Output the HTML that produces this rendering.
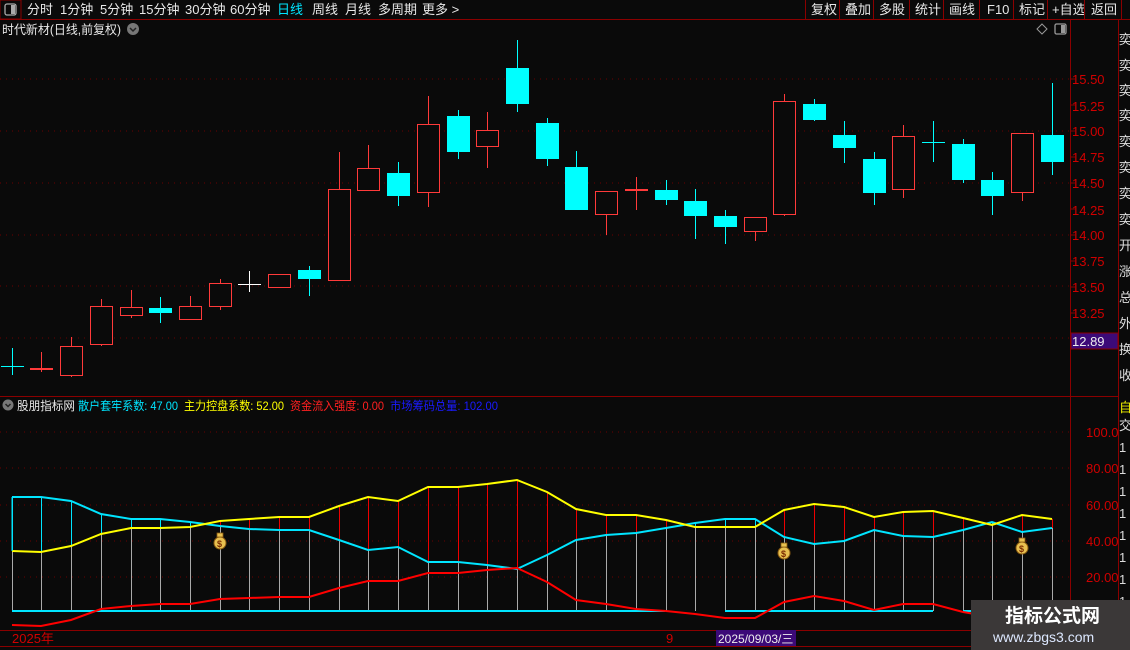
<!DOCTYPE html>
<html><head><meta charset="utf-8"><style>
html,body{margin:0;padding:0;background:#0a0a0a;width:1130px;height:650px;overflow:hidden;font-family:"Liberation Sans","Noto Sans CJK SC",sans-serif}
svg{position:absolute;left:0;top:0}
text{font-family:"Liberation Sans","Noto Sans CJK SC",sans-serif}
</style></head><body>
<svg id="s" width="1130" height="650" xmlns="http://www.w3.org/2000/svg">
<rect width="1130" height="650" fill="#0a0a0a"/>
<line x1="0" y1="19.5" x2="1130" y2="19.5" stroke="#8b0000"/>
<rect x="0" y="0" width="21" height="19" fill="none" stroke="#8b0000"/>
<rect x="5" y="4" width="11" height="11" rx="2" fill="none" stroke="#aaa" stroke-width="1.3"/>
<rect x="11" y="5" width="4" height="9" fill="#aaa"/>
<g font-size="13" fill="#e8e8e8">
<text x="27" y="14">分时</text><text x="60" y="14">1分钟</text><text x="100" y="14">5分钟</text><text x="139" y="14">15分钟</text><text x="185" y="14">30分钟</text><text x="230" y="14">60分钟</text>
<text x="277" y="14" fill="#00e5ff">日线</text><text x="312" y="14">周线</text><text x="345" y="14">月线</text><text x="378" y="14">多周期</text><text x="422" y="14">更多 &gt;</text>
<text x="811" y="14">复权</text><text x="845" y="14">叠加</text><text x="879" y="14">多股</text><text x="915" y="14">统计</text><text x="949" y="14">画线</text><text x="987" y="14">F10</text><text x="1019" y="14">标记</text><text x="1052" y="14">+自选</text><text x="1091" y="14">返回</text>
</g>
<g stroke="#8b0000"><line x1="805.5" y1="0" x2="805.5" y2="19"/><line x1="839.5" y1="0" x2="839.5" y2="19"/><line x1="873.5" y1="0" x2="873.5" y2="19"/><line x1="909.5" y1="0" x2="909.5" y2="19"/><line x1="943.5" y1="0" x2="943.5" y2="19"/><line x1="979.5" y1="0" x2="979.5" y2="19"/><line x1="1013.5" y1="0" x2="1013.5" y2="19"/><line x1="1047.5" y1="0" x2="1047.5" y2="19"/><line x1="1084.5" y1="0" x2="1084.5" y2="19"/><line x1="1121.5" y1="0" x2="1121.5" y2="19"/></g>
<text x="2" y="34" font-size="12.5" fill="#e8e8e8" textLength="119" lengthAdjust="spacingAndGlyphs">时代新材(日线,前复权)</text>
<circle cx="133" cy="29" r="6" fill="#777"/><path d="M130 28l3 3 3-3" stroke="#222" stroke-width="1.5" fill="none"/>
<path d="M1042 24l5 5-5 5-5-5z" fill="none" stroke="#999"/>
<rect x="1055" y="24" width="11" height="10" rx="1.5" fill="none" stroke="#999" stroke-width="1.3"/><rect x="1061" y="25" width="4" height="8" fill="#999"/>
<line x1="1070.5" y1="20" x2="1070.5" y2="650" stroke="#8b0000"/>
<line x1="1118.5" y1="20" x2="1118.5" y2="650" stroke="#8b0000"/>
<line x1="0" y1="396.5" x2="1118" y2="396.5" stroke="#8b0000"/>
<line x1="0" y1="630.5" x2="1118" y2="630.5" stroke="#8b0000"/>
<line x1="0" y1="646.5" x2="1118" y2="646.5" stroke="#8b0000"/>
<g id="g"></g>
<circle cx="8" cy="405" r="5.5" fill="#777"/><path d="M5.5 404l2.5 2.5 2.5-2.5" stroke="#222" stroke-width="1.5" fill="none"/>
<g font-size="12"><text x="17" y="410" fill="#e8e8e8" textLength="58" lengthAdjust="spacingAndGlyphs">股朋指标网</text><text x="78" y="410" fill="#00e5ff" textLength="100" lengthAdjust="spacingAndGlyphs">散户套牢系数: 47.00</text><text x="184" y="410" fill="#ffff00" textLength="100" lengthAdjust="spacingAndGlyphs">主力控盘系数: 52.00</text><text x="290" y="410" fill="#ff2020" textLength="94" lengthAdjust="spacingAndGlyphs">资金流入强度: 0.00</text><text x="390" y="410" fill="#1a1aff" textLength="108" lengthAdjust="spacingAndGlyphs">市场筹码总量: 102.00</text></g>
<g font-size="13" fill="#d00000">
<text x="1072" y="84">15.50</text><text x="1072" y="111">15.25</text><text x="1072" y="136">15.00</text><text x="1072" y="162">14.75</text><text x="1072" y="188">14.50</text><text x="1072" y="215">14.25</text><text x="1072" y="240">14.00</text><text x="1072" y="266">13.75</text><text x="1072" y="292">13.50</text><text x="1072" y="318">13.25</text>
<text x="1086" y="437">100.0</text><text x="1086" y="473">80.00</text><text x="1086" y="510">60.00</text><text x="1086" y="546">40.00</text><text x="1086" y="582">20.00</text>
<text x="12" y="643">2025年</text><text x="666" y="643">9</text>
</g>
<rect x="1071" y="333" width="47" height="16" fill="#3c0a78" stroke="#8b0000"/>
<text x="1072" y="346" font-size="13" fill="#eee">12.89</text>
<rect x="716" y="630" width="80" height="16" fill="#3c0a78"/>
<text x="718" y="643" font-size="12" fill="#eee">2025/09/03/三</text>
<g font-size="13" fill="#ddd"><text x="1119" y="44">奕</text><text x="1119" y="70">奕</text><text x="1119" y="95">奕</text><text x="1119" y="120">奕</text><text x="1119" y="146">奕</text><text x="1119" y="172">奕</text><text x="1119" y="198">奕</text><text x="1119" y="224">奕</text><text x="1119" y="250">开</text><text x="1119" y="276">涨</text><text x="1119" y="302">总</text><text x="1119" y="328">外</text><text x="1119" y="354">换</text><text x="1119" y="380">收</text>
<text x="1119" y="412" fill="#ee0">自</text><text x="1119" y="430">交</text><text x="1119" y="452">1</text><text x="1119" y="474">1</text><text x="1119" y="496">1</text><text x="1119" y="518">1</text><text x="1119" y="540">1</text><text x="1119" y="562">1</text><text x="1119" y="584">1</text><text x="1119" y="606">1</text></g>
<rect x="971" y="600" width="159" height="50" fill="#3b3838"/>
<text x="1005" y="622" font-size="19" font-weight="bold" fill="#fff">指标公式网</text>
<text x="993" y="642" font-size="14" fill="#dde8ff">www.zbgs3.com</text>
</svg>
<script>
var g=document.getElementById('g'),h='';
var X=[12,41,71,101,131,160,190,220,249,279,309,339,368,398,428,458,487,517,547,576,606,636,666,695,725,755,784,814,844,874,903,933,963,992,1022,1052];
[79,131,183,235,286,338].forEach(function(y){h+='<line x1="0" y1="'+y+'" x2="1070" y2="'+y+'" stroke="#6a0000" stroke-dasharray="1 5"/>';});
[432,468,505,541,577].forEach(function(y){h+='<line x1="0" y1="'+y+'" x2="1070" y2="'+y+'" stroke="#6a0000" stroke-dasharray="1 5"/>';});
for(var y=79;y<340;y+=26)h+='<line x1="1070" y1="'+y+'" x2="1075" y2="'+y+'" stroke="#8b0000"/>';
var C=[['c',366,366,348,375],['r',369,369,352,372],['r',346,375,337,377],['r',306,344,299,346],['r',307,315,290,318],['c',308,313,297,323],['r',306,319,296,320],['r',283,306,279,310],['w',284,284,271,292],['r',274,287,274,287],['c',270,279,266,296],['r',189,280,152,280],['r',168,190,145,190],['c',173,196,162,206],['r',124,192,96,207],['c',116,152,110,159],['r',130,146,112,168],['c',68,104,40,112],['c',123,159,118,166],['c',167,210,151,210],['r',191,214,191,235],['r',190,190,177,210],['c',190,200,180,205],['c',201,216,189,239],['c',216,227,210,244],['r',217,231,217,241],['r',101,214,94,216],['c',104,120,99,121],['c',135,148,121,163],['c',159,193,152,205],['r',136,189,125,198],['c',142,142,121,162],['c',144,180,139,183],['c',180,196,172,215],['r',133,192,133,201],['c',135,162,83,175]];
C.forEach(function(c,i){var x=X[i],col=c[0]=='c'?'#00ffff':c[0]=='r'?'#ff3a3a':'#ffffff';
h+='<line x1="'+(x+.5)+'" y1="'+c[3]+'" x2="'+(x+.5)+'" y2="'+c[4]+'" stroke="'+col+'"/>';
if(c[2]-c[1]<2){h+='<rect x="'+(x-11)+'" y="'+(c[1]-(c[0]=='r'?1:0))+'" width="23" height="'+(c[0]=='r'?2:1)+'" fill="'+col+'"/>';}
else if(c[0]=='c'){h+='<rect x="'+(x-11)+'" y="'+c[1]+'" width="23" height="'+(c[2]-c[1])+'" fill="'+col+'"/>';}
else{h+='<rect x="'+(x-10.5)+'" y="'+(c[1]+.5)+'" width="22" height="'+(c[2]-c[1])+'" fill="#0a0a0a" stroke="'+col+'"/>';}
});
var CY=[497,497,501,514,519,519,522,526,529,530,530,540,550,547,562,562,565,569,555,540,535,533,528,523,519,519,537,544,541,530,536,537,530,522,532,528];
var YL=[551,552,546,534,528,528,527,521,519,517,517,506,497,501,487,487,484,480,492,509,515,515,520,527,527,527,510,504,507,517,512,511,518,525,515,519];
var RD=[625,626,620,609,606,604,604,599,598,597,597,588,581,581,573,573,570,568,582,600,604,609,611,614,618,618,602,596,601,610,604,604,612,617,615,612];
X.forEach(function(x,i){var lo=Math.max(CY[i],YL[i]),hi=Math.min(CY[i],YL[i]);
h+='<line x1="'+(x+.5)+'" y1="611" x2="'+(x+.5)+'" y2="'+lo+'" stroke="#aaa"/>';
h+='<line x1="'+(x+.5)+'" y1="'+lo+'" x2="'+(x+.5)+'" y2="'+hi+'" stroke="'+(YL[i]<CY[i]?'#e00':'#00e5ff')+'"/>';});
function pl(a,col){var p=X.map(function(x,i){return x+','+a[i]}).join(' ');return '<polyline points="'+p+'" fill="none" stroke="'+col+'" stroke-width="2"/>';}
h+='<polyline points="12,611 665,611" fill="none" stroke="#00e5ff" stroke-width="2"/>';
h+='<polyline points="725,611 933,611" fill="none" stroke="#00e5ff" stroke-width="2"/>';
h+='<polyline points="963,611 1052,611" fill="none" stroke="#00e5ff" stroke-width="2"/>';
h+=pl(CY,'#00e5ff')+pl(YL,'#ffff00')+pl(RD,'#ff0000');
h+='<line x1="12" y1="497" x2="12" y2="551" stroke="#00e5ff"/>';
[[220,543],[784,553],[1022,548]].forEach(function(b){h+='<circle cx="'+b[0]+'" cy="'+b[1]+'" r="6" fill="#e8c050" stroke="#8a5a10"/><rect x="'+(b[0]-3)+'" y="'+(b[1]-10)+'" width="6" height="4" fill="#e8c050" stroke="#8a5a10" stroke-width=".8"/><text x="'+(b[0]-3)+'" y="'+(b[1]+4)+'" font-size="9" font-weight="bold" fill="#7a2a00">$</text>';});
g.innerHTML=h;
</script>
</body></html>
